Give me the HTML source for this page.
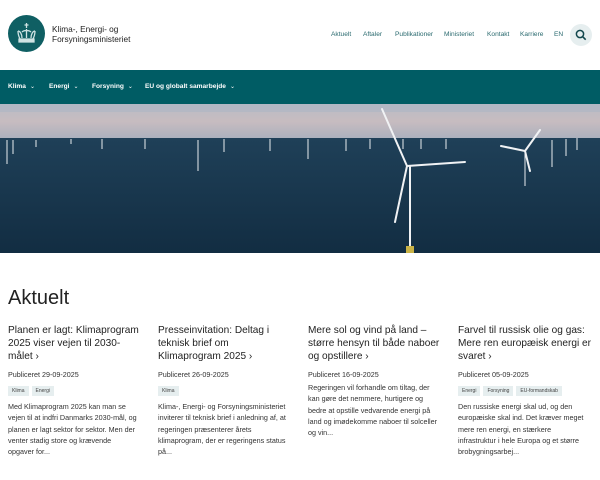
<!DOCTYPE html>
<html><head><meta charset="utf-8"><style>
*{margin:0;padding:0;box-sizing:border-box}
body{width:600px;height:480px;overflow:hidden;background:#fff;font-family:"Liberation Sans",sans-serif;color:#222;position:relative}
.a{position:absolute}
.logo{left:8px;top:15px;width:37px;height:37px;border-radius:50%;background:#0f5f63}
.brand{left:52px;top:25px;font-size:8.3px;line-height:9.5px;color:#222}
.top{top:31px;font-size:6.6px;color:#2a6a6f}
.srch{left:570px;top:24px;width:22px;height:22px;border-radius:50%;background:#e6eeef}
.nav{left:0;top:70px;width:600px;height:34px;background:#005c64}
.nav span{position:absolute;top:13px;font-size:6.6px;font-weight:bold;color:#fff}
.nav i{font-style:normal;font-weight:normal;margin-left:4px;font-size:6px}
h1{position:absolute;left:8px;top:287px;font-size:20px;font-weight:normal;color:#222}
.col{position:absolute;top:324px;width:142px}
.t{font-size:10.1px;line-height:13px;color:#222;height:39px;white-space:nowrap}
.p{font-size:7.2px;color:#333;margin-top:7px;height:10px}
.tags{margin-top:6px;height:10px;display:flex}
.tags span{display:block;background:#e6eeef;font-size:5px;color:#444;padding:2px 4px;margin-right:3px;line-height:6px}
.b{font-size:7.2px;line-height:11.3px;color:#333;margin-top:5px;white-space:nowrap}
</style></head><body>
<div class="a logo"><svg width="37" height="37" viewBox="0 0 37 37"><g fill="none" stroke="#cfe3e3" stroke-width="1.3"><path d="M18.5 8v5M16.5 10h4"/><path d="M10 16c2 0 4 3 4 7M27 16c-2 0-4 3-4 7M18.5 14v9M14 17c2-2 7-2 9 0"/><path d="M11 24h15v3H11z" fill="#cfe3e3"/><path d="M10 16c0 3 1 6 2 8M27 16c0 3-1 6-2 8"/></g></svg></div>
<div class="a brand">Klima-, Energi- og<br>Forsyningsministeriet</div>
<div class="a top" style="left:331px">Aktuelt</div>
<div class="a top" style="left:363px">Aftaler</div>
<div class="a top" style="left:395px">Publikationer</div>
<div class="a top" style="left:444px">Ministeriet</div>
<div class="a top" style="left:487px">Kontakt</div>
<div class="a top" style="left:520px">Karriere</div>
<div class="a top" style="left:554px">EN</div>
<div class="a srch"><svg width="22" height="22"><circle cx="10" cy="10" r="3.6" fill="none" stroke="#12474d" stroke-width="1.5"/><path d="M12.7 12.7l3 3" stroke="#12474d" stroke-width="1.6"/></svg></div>
<div class="a nav"><span style="left:8px">Klima<i>⌄</i></span><span style="left:49px">Energi<i>⌄</i></span><span style="left:92px">Forsyning<i>⌄</i></span><span style="left:145px">EU og globalt samarbejde<i>⌄</i></span></div>
<svg class="a" style="left:0;top:104px" width="600" height="149" viewBox="0 104 600 149">
<defs><linearGradient id="s" x1="0" y1="0" x2="0" y2="1"><stop offset="0" stop-color="#b9bcc6"/><stop offset=".5" stop-color="#c7bcc0"/><stop offset="1" stop-color="#aab0bd"/></linearGradient>
<linearGradient id="w" x1="0" y1="0" x2="0" y2="1"><stop offset="0" stop-color="#1f4058"/><stop offset="1" stop-color="#122d42"/></linearGradient></defs>
<rect x="0" y="104" width="600" height="35" fill="url(#s)"/>
<rect x="0" y="104" width="600" height="8" fill="#a9b3c3" opacity=".5"/>
<rect x="0" y="138" width="600" height="115" fill="url(#w)"/>
<g stroke="#e8ecef" stroke-width="1">
<path d="M7 140v24M13 140v14M36 140v7M71 139v5M102 139v10M145 139v10M198 140v31M224 139v13M270 139v12M308 139v20M346 139v12M370 139v10M403 139v10M421 139v10M446 139v10M525 150v36M552 140v27M566 139v17M577 138v12"/>
</g>
<g stroke="#f0f2f4" stroke-width="2" stroke-linecap="round" fill="none">
<path d="M410 167v86"/><path d="M407 166L382 109M407 166l58-4M407 166L395 222"/>
<path d="M525 151L540 130M525 151l-24-5M525 151l5 20"/>
</g>
<rect x="406" y="246" width="8" height="7" fill="#c9b347"/>
</svg>
<h1>Aktuelt</h1>
<div class="col" style="left:8px"><div class="t">Planen er lagt: Klimaprogram<br>2025 viser vejen til 2030-<br>målet ›</div><div class="p">Publiceret 29-09-2025</div><div class="tags"><span>Klima</span><span>Energi</span></div><div class="b">Med Klimaprogram 2025 kan man se<br>vejen til at indfri Danmarks 2030-mål, og<br>planen er lagt sektor for sektor. Men der<br>venter stadig store og krævende<br>opgaver for...</div></div>
<div class="col" style="left:158px"><div class="t">Presseinvitation: Deltag i<br>teknisk brief om<br>Klimaprogram 2025 ›</div><div class="p">Publiceret 26-09-2025</div><div class="tags"><span>Klima</span></div><div class="b">Klima-, Energi- og Forsyningsministeriet<br>inviterer til teknisk brief i anledning af, at<br>regeringen præsenterer årets<br>klimaprogram, der er regeringens status<br>på...</div></div>
<div class="col" style="left:308px"><div class="t">Mere sol og vind på land –<br>større hensyn til både naboer<br>og opstillere ›</div><div class="p">Publiceret 16-09-2025</div><div class="b" style="margin-top:2px">Regeringen vil forhandle om tiltag, der<br>kan gøre det nemmere, hurtigere og<br>bedre at opstille vedvarende energi på<br>land og imødekomme naboer til solceller<br>og vin...</div></div>
<div class="col" style="left:458px"><div class="t">Farvel til russisk olie og gas:<br>Mere ren europæisk energi er<br>svaret ›</div><div class="p">Publiceret 05-09-2025</div><div class="tags"><span>Energi</span><span>Forsyning</span><span>EU-formandskab</span></div><div class="b">Den russiske energi skal ud, og den<br>europæiske skal ind. Det kræver meget<br>mere ren energi, en stærkere<br>infrastruktur i hele Europa og et større<br>brobygningsarbej...</div></div>
</body></html>
